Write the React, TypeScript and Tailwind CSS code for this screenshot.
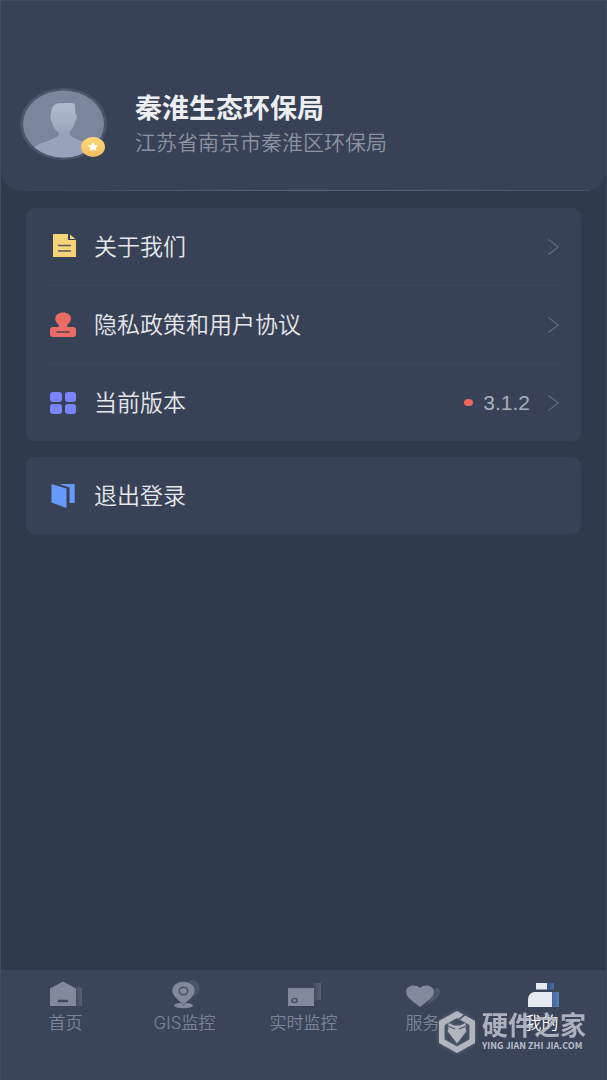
import React from "react";

type MenuItem = {
  id: string;
  label: string;
  icon: React.ReactNode;
  version?: string;
};

type TabItem = {
  id: string;
  label: string;
  icon: React.ReactNode;
};

const AboutIcon = () => (
  <svg width="30" height="30" viewBox="0 0 30 30" aria-hidden="true">
    <path d="M5 2H20V8H28V25H5Z" fill="#f5d376" />
    <path d="M22 2.5L27.5 7H22Z" fill="#f5d376" />
    <path d="M10 13.5H23M10 19H23" stroke="#5c5a55" strokeWidth="1.5" />
  </svg>
);

const StampIcon = () => (
  <svg width="30" height="30" viewBox="0 0 30 30" aria-hidden="true">
    <path
      d="M15 2.5C19.6 2.5 23 5.2 23 8.8C23 11.1 21.6 12.8 20 14C18.6 15.1 18.8 17 20.5 17H25C27 17 28 18.2 28 19.8V24.2C28 26 26.8 27 25 27H5C3.2 27 2 26 2 24.2V19.8C2 18.2 3 17 5 17H9.5C11.2 17 11.4 15.1 10 14C8.4 12.8 7.3 11.1 7.3 8.8C7.3 5.2 10.6 2.5 15 2.5Z"
      fill="#eb6b66"
    />
    <path d="M8.5 22H21.5" stroke="#55414f" strokeWidth="1.5" />
  </svg>
);

const GridIcon = () => (
  <svg width="30" height="30" viewBox="0 0 30 30" fill="#7c84fb" aria-hidden="true">
    <rect x="2" y="4" width="12" height="10" rx="3" />
    <rect x="17" y="4" width="11" height="10" rx="3" />
    <rect x="2" y="16" width="12" height="10" rx="3" />
    <rect x="17" y="16" width="11" height="10" rx="3" />
  </svg>
);

const LogoutIcon = () => (
  <svg width="30" height="30" viewBox="0 0 30 30" fill="#6699f8" aria-hidden="true">
    <path d="M3.5 3L18.5 7.5V27L3.5 21.5Z" />
    <path d="M11 3H26.7V22H21.5V6.5Z" />
  </svg>
);

const ChevronIcon = () => (
  <svg width="11" height="18" viewBox="0 0 11 18" fill="none" aria-hidden="true">
    <path d="M0.5 1.5L10.3 9L0.5 16.5" stroke="#5f697c" strokeWidth="1.2" />
  </svg>
);

const AvatarIcon = () => (
  <svg width="88" height="74" viewBox="0 0 88 74" aria-hidden="true">
    <defs>
      <linearGradient id="person" x1="0" y1="0" x2="0" y2="1">
        <stop offset="0" stopColor="#b0bbce" />
        <stop offset="1" stopColor="#9ca7be" />
      </linearGradient>
      <linearGradient id="gold" x1="0" y1="0" x2="0" y2="1">
        <stop offset="0" stopColor="#ffda77" />
        <stop offset="1" stopColor="#f4bd63" />
      </linearGradient>
      <clipPath id="avatarClip">
        <ellipse cx="43.5" cy="37" rx="40.5" ry="33.5" />
      </clipPath>
    </defs>
    <ellipse cx="43.5" cy="37" rx="43.5" ry="36" fill="#4a556a" />
    <ellipse cx="43.5" cy="37" rx="40.5" ry="33.5" fill="#7b859b" />
    <g clipPath="url(#avatarClip)">
      <path
        d="M14 74V61C17 57 22 56 28 54L35 51C38 50 39 48 39 45H50C50 48 51 50 54 51L61 54C68 56 73 57 75 61V74Z"
        fill="#98a2ba"
      />
      <path
        d="M36 17C38 15.5 42 16.5 46 16C50 16 53 15.5 54.5 17C55.5 19 55 23 55.5 27C57.5 28 57 33 55 34.5C54 41 49 47 43.5 47C38 47 33 41 32 35C30 33 30 29 31 27C31 22 33 18 36 17Z"
        fill="url(#person)"
      />
    </g>
    <ellipse cx="73" cy="60" rx="12" ry="10" fill="url(#gold)" />
    <path
      d="M73 55L74.7 58.2L78.5 58.6L75.7 60.8L76.5 64L73 62.5L69.5 64L70.3 60.8L67.5 58.6L71.3 58.2Z"
      fill="#fff"
    />
  </svg>
);

const HomeIcon = () => (
  <svg width="44" height="30" viewBox="0 0 44 30" aria-hidden="true">
    <defs>
      <linearGradient id="shade" x1="0" y1="0" x2="1" y2="0">
        <stop offset="0" stopColor="#434d61" />
        <stop offset="1" stopColor="#596275" />
      </linearGradient>
    </defs>
    <path d="M32 5.5L38 8V26H32Z" fill="url(#shade)" />
    <path d="M6 8.5L19 1.5L32 8.5V26H6Z" fill="#818a9d" />
    <path d="M14 21H24" stroke="#3e485c" strokeWidth="2.5" />
  </svg>
);

const MapIcon = () => (
  <svg width="44" height="30" viewBox="0 0 44 30" aria-hidden="true">
    <path d="M26 0.5C33 -1 37 4 36.5 9C36 13 33 16 29 17Z" fill="#4c566a" />
    <ellipse cx="20.5" cy="25.5" rx="9.5" ry="2.8" fill="#818a9d" />
    <path
      d="M20.5 1.5C27.5 1.5 32 5.5 32 10.5C32 15.5 27 19.5 20.5 25C14 19.5 9 15.5 9 10.5C9 5.5 14 1.5 20.5 1.5Z"
      fill="#818a9d"
      stroke="#3b4559"
      strokeWidth="0.6"
    />
    <ellipse cx="20.5" cy="11" rx="4.3" ry="3.7" fill="none" stroke="#464f63" strokeWidth="1.5" />
  </svg>
);

const MonitorIcon = () => (
  <svg width="44" height="30" viewBox="0 0 44 30" aria-hidden="true">
    <defs>
      <linearGradient id="monitorShade" x1="0" y1="0" x2="1" y2="0">
        <stop offset="0" stopColor="#3f495d" />
        <stop offset="1" stopColor="#5a6376" />
      </linearGradient>
    </defs>
    <path d="M31 3H39V20H32Z" fill="url(#monitorShade)" />
    <rect x="6" y="8" width="26" height="18" fill="#818a9d" />
    <ellipse cx="12.5" cy="20.5" rx="2.6" ry="2" fill="none" stroke="#454e61" strokeWidth="1.5" />
  </svg>
);

const HeartIcon = () => (
  <svg width="44" height="30" viewBox="0 0 44 30" aria-hidden="true">
    <path d="M34 8C38 7 40 10 39 13.5C36 19 31 22 26 24.5Z" fill="#4c566a" />
    <path
      d="M19 27C12 21.5 5 17 5 12C5 5.5 14 3.5 19 8C24 3.5 33 5.5 33 12C33 17 26 21.5 19 27Z"
      fill="#818a9d"
    />
  </svg>
);

const MineIcon = () => (
  <svg width="44" height="30" viewBox="0 0 44 30" aria-hidden="true">
    <defs>
      <linearGradient id="blueShade" x1="0" y1="0" x2="1" y2="0">
        <stop offset="0" stopColor="#355283" />
        <stop offset="1" stopColor="#557eb9" />
      </linearGradient>
    </defs>
    <path d="M26 3H34V9.5H26ZM30 12H39V27H30Z" fill="url(#blueShade)" />
    <path d="M16 3H27V9.5H16ZM15 12H32V27H8V20C8 15 11 12 15 12Z" fill="#e7eaf1" />
  </svg>
);

const mainMenu: MenuItem[] = [
  { id: "about", label: "关于我们", icon: <AboutIcon /> },
  { id: "privacy", label: "隐私政策和用户协议", icon: <StampIcon /> },
  { id: "version", label: "当前版本", icon: <GridIcon />, version: "3.1.2" },
];

const tabs: TabItem[] = [
  { id: "home", label: "首页", icon: <HomeIcon /> },
  { id: "gis", label: "GIS监控", icon: <MapIcon /> },
  { id: "monitor", label: "实时监控", icon: <MonitorIcon /> },
  { id: "service", label: "服务", icon: <HeartIcon /> },
  { id: "mine", label: "我的", icon: <MineIcon /> },
];

const Watermark = () => (
  <div className="pointer-events-none absolute right-5 top-10 flex items-center gap-1.5 text-[#b9bec8]">
    <svg
      width="38"
      height="44"
      viewBox="0 0 38 44"
      className="drop-shadow-[0_0_2px_rgba(190,200,215,0.3)]"
      aria-hidden="true"
    >
      <path
        fillRule="evenodd"
        d="M19 1L37 11V33L19 43L1 33V11ZM19 8L6.5 15V29.5L19 36.5L31.5 29.5V15Z"
        fill="#b0b5c0"
      />
      <path d="M27 4.5L21 9.5" stroke="#3b4559" strokeWidth="1.5" />
      <path d="M10.5 13L16 15.500H22L27.5 13V19L28.5 21L19 33.5L9.5 21L10.5 19Z" fill="#b0b5c0" />
      <path d="M11 16.5L17 19M27 16.5L21 19" stroke="#4b5468" strokeWidth="1.2" />
    </svg>
    <div className="flex flex-col">
      <span className="text-[26px] font-bold leading-7 opacity-90">硬件之家</span>
      <span className="whitespace-nowrap font-['Noto_Sans_CJK_SC'] text-[9px] font-bold leading-3">
        YING JIAN ZHI JIA.COM
      </span>
    </div>
  </div>
);

const MenuRow = ({ item }: { item: MenuItem }) => (
  <button type="button" className="flex h-[77px] w-full items-center gap-4 text-left">
    {item.icon}
    <span className="flex-1 text-[23px] font-[350] leading-8 text-[#e5e7eb]">{item.label}</span>
    {item.version && (
      <span className="mr-0.5 flex items-center gap-2.5 font-['Liberation_Sans',sans-serif] text-[21px] text-[#a8aeb9]">
        <span className="h-[7px] w-[9px] rounded-[50%] bg-[#f4645f]"></span>
        {item.version}
      </span>
    )}
    {item.id !== "logout" && <ChevronIcon />}
  </button>
);

const App = () => {
  return (
    <div className="flex min-h-screen flex-col border-x border-t border-[#414c60] bg-[#303a4d] font-['Inter','Noto_Sans_CJK_SC',sans-serif]">
      {/* Profile */}
      <header className="relative flex h-[190px] items-start gap-[27px] rounded-b-[22px] bg-[#384256] pl-[19px] pt-[86px]">
        <AvatarIcon />
        <div className="flex flex-col pt-1">
          <h1 className="text-[27px] font-bold leading-9 text-[#eceef1]">秦淮生态环保局</h1>
          <p className="text-[21px] font-[350] leading-8 text-[#8b93a1]">江苏省南京市秦淮区环保局</p>
        </div>
        <div className="absolute inset-x-4 bottom-0 h-px bg-gradient-to-r from-transparent via-[#5b6577] to-[#465064]"></div>
      </header>

      {/* Menu */}
      <main className="flex flex-1 flex-col gap-4 px-[25px] pt-[17px]">
        <section className="divide-y divide-[#3d475b] rounded-[9px] bg-[#384256] px-[22px]">
          {mainMenu.map((item) => (
            <div key={item.id}>
              <MenuRow item={item} />
            </div>
          ))}
        </section>
        <section className="rounded-[9px] bg-[#384256] px-[22px]">
          <MenuRow item={{ id: "logout", label: "退出登录", icon: <LogoutIcon /> }} />
        </section>
      </main>

      {/* Tab bar */}
      <nav className="relative grid h-[110px] grid-cols-5 bg-[#3b4559] px-[5px] pt-2.5">
        {tabs.map((tab) => (
          <a
            key={tab.id}
            href={`#${tab.id}`}
            className={`flex flex-col items-center text-[17px] font-[350] leading-[26px] ${
              tab.id === "mine" ? "text-white" : "text-[#7a8497]"
            }`}
          >
            {tab.icon}
            <span>{tab.label}</span>
          </a>
        ))}
        <Watermark />
      </nav>
    </div>
  );
};

export default App;
